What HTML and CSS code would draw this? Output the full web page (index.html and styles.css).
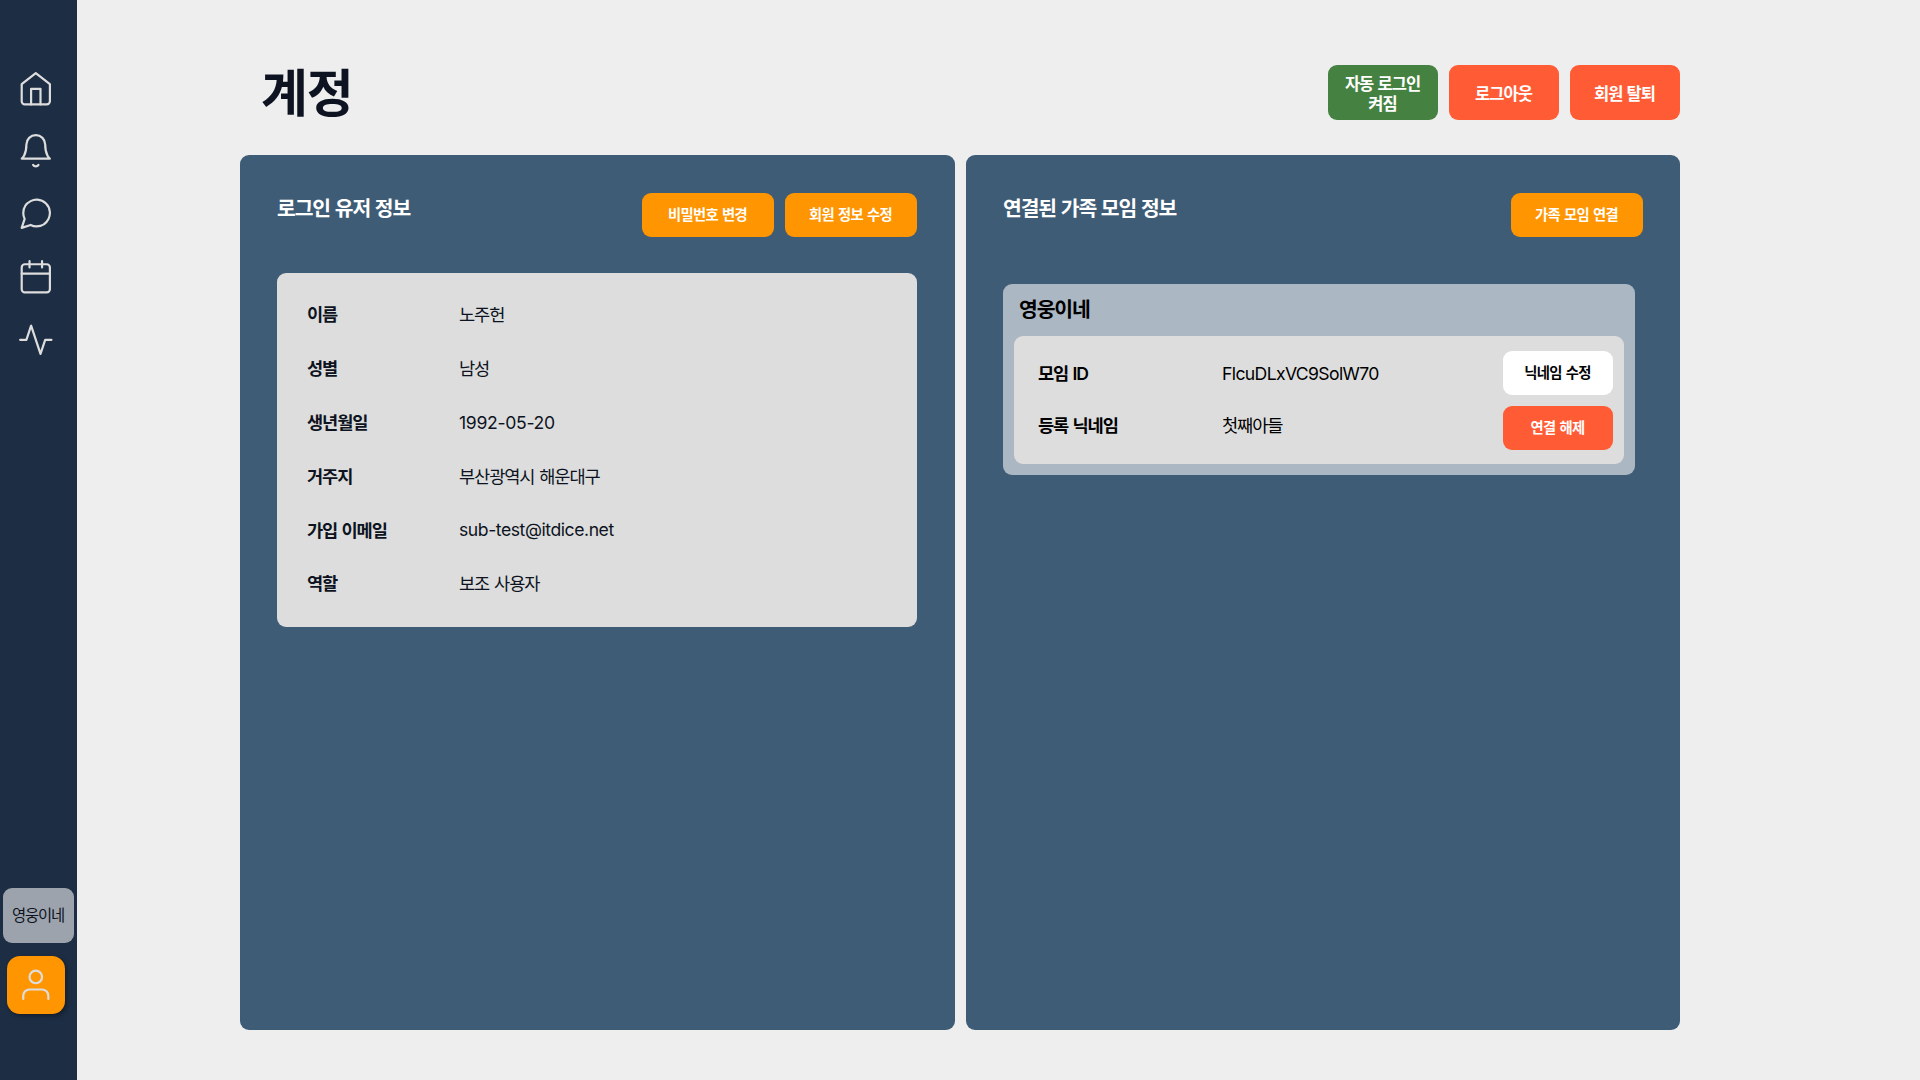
FILE: index.html
```html
<!DOCTYPE html>
<html lang="ko">
<head>
<meta charset="utf-8">
<title>계정</title>
<link rel="stylesheet" href="styles.css">
</head>
<body>
<nav class="sidebar">
  <div class="menu">
    <svg class="icon" viewBox="0 0 24 24"><path d="M3 9l9-7 9 7v11a2 2 0 0 1-2 2H5a2 2 0 0 1-2-2z"/><path d="M9 22V12h6v10"/></svg>
    <svg class="icon" viewBox="0 0 24 24"><path d="M18 8A6 6 0 0 0 6 8c0 7-3 9-3 9h18s-3-2-3-9"/><path d="M13.73 21a2 2 0 0 1-3.46 0"/></svg>
    <svg class="icon" viewBox="0 0 24 24"><path d="M21 11.5a8.38 8.38 0 0 1-.9 3.8 8.5 8.5 0 0 1-7.6 4.7 8.38 8.38 0 0 1-3.8-.9L3 21l1.900-5.700a8.38 8.38 0 0 1-.9-3.800 8.500 8.500 0 0 1 4.700-7.600 8.380 8.380 0 0 1 3.800-.9h.5a8.480 8.480 0 0 1 8 8v.5z"/></svg>
    <svg class="icon" viewBox="0 0 24 24"><rect x="3" y="4" width="18" height="18" rx="2"/><path d="M16 2v4M8 2v4M3 10h18"/></svg>
    <svg class="icon" viewBox="0 0 24 24"><path d="M22 12h-4l-3 9L9 3l-3 9H2"/></svg>
  </div>
  <div class="profile">
    <div class="family-chip">영웅이네</div>
    <div class="user-tile">
      <svg class="icon" viewBox="0 0 24 24"><path d="M20 21v-2a4 4 0 0 0-4-4H8a4 4 0 0 0-4 4v2"/><circle cx="12" cy="7" r="4"/></svg>
    </div>
  </div>
</nav>
<main class="page">
  <header class="page-header">
    <h1>계정</h1>
    <div class="actions">
      <button class="btn large green">자동 로그인<br>켜짐</button>
      <button class="btn large red">로그아웃</button>
      <button class="btn large red">회원 탈퇴</button>
    </div>
  </header>
  <div class="panels">
    <section class="panel">
      <div class="panel-head">
        <h2>로그인 유저 정보</h2>
        <div class="actions">
          <button class="btn orange">비밀번호 변경</button>
          <button class="btn orange">회원 정보 수정</button>
        </div>
      </div>
      <dl class="info">
        <dt>이름</dt><dd>노주헌</dd>
        <dt>성별</dt><dd>남성</dd>
        <dt>생년월일</dt><dd class="number">1992-05-20</dd>
        <dt>거주지</dt><dd>부산광역시 해운대구</dd>
        <dt>가입 이메일</dt><dd class="email">sub-test@itdice.net</dd>
        <dt>역할</dt><dd>보조 사용자</dd>
      </dl>
    </section>
    <section class="panel">
      <div class="panel-head">
        <h2>연결된 가족 모임 정보</h2>
        <div class="actions">
          <button class="btn orange">가족 모임 연결</button>
        </div>
      </div>
      <article class="family">
        <h3>영웅이네</h3>
        <div class="family-body">
          <dl class="family-info">
            <dt>모임 ID</dt><dd class="code">FlcuDLxVC9SolW70</dd>
            <dt>등록 닉네임</dt><dd>첫째아들</dd>
          </dl>
          <div class="family-actions">
            <button class="btn white">닉네임 수정</button>
            <button class="btn red">연결 해제</button>
          </div>
        </div>
      </article>
    </section>
  </div>
</main>
</body>
</html>
```
FILE: styles.css
```css
* { box-sizing: border-box; }
body {
  margin: 0;
  height: 1080px;
  display: flex;
  background: #eee;
  color: #0d1321;
  font-family: Inter, "Noto Sans CJK KR", sans-serif;
  font-size: 17.6px;
  letter-spacing: -0.063em;
  word-spacing: 0.06em;
  overflow: hidden;
}
h1, h2, h3, dl, dd { margin: 0; }

.sidebar {
  width: 77px;
  height: 100%;
  padding: 69.7px 0 66px;
  background: #1d2d44;
  display: flex;
  flex-direction: column;
  justify-content: space-between;
}
.icon {
  display: block;
  width: 37.6px;
  height: 37.6px;
  fill: none;
  stroke: #ddd;
  stroke-width: 1.4;
  stroke-linecap: round;
  stroke-linejoin: round;
}
.menu { display: flex; flex-direction: column; gap: 25.2px; padding-left: 16.5px; }
.profile { display: flex; flex-direction: column; gap: 13px; padding-left: 3px; }
.family-chip {
  width: 71px;
  height: 55px;
  padding: 0 1px 3px 0;
  border-radius: 9px;
  background: #9da3ad;
  display: flex;
  align-items: center;
  justify-content: center;
  font-size: 15.4px;
}
.user-tile {
  width: 58px;
  height: 58px;
  margin-left: 4px;
  border-radius: 13px;
  background: #ff9500;
  box-shadow: 2px 2px 4px rgba(0, 0, 0, .35);
  display: flex;
  align-items: center;
  justify-content: center;
}

.page { width: 1440px; margin-left: 163px; padding-top: 65px; }
.page-header { display: flex; justify-content: space-between; height: 90px; padding-left: 21px; }
h1 { padding-top: 1px; font-size: 51px; line-height: 55px; font-weight: 700; }
.actions { display: flex; gap: 11px; align-items: flex-start; }
.btn {
  width: 132px;
  height: 44px;
  padding: 0 1px 0 0;
  border: 0;
  border-radius: 9px;
  color: #fff;
  font: 700 14.3px/20px Inter, "Noto Sans CJK KR", sans-serif;
  letter-spacing: -0.045em;
  word-spacing: 0.08em;
}
.btn.large { width: 110px; height: 55px; padding-top: 2px; font-size: 16.5px; letter-spacing: -0.06em; }
.green { background: #458241; }
.red { background: #ff5c35; }
.orange { background: #ff9500; }
.btn.white { background: #fff; color: #000; }

.panels { display: grid; grid-template-columns: 715px 714px; gap: 11px; height: 875px; }
.panel { background: #3e5c76; border-radius: 9px; padding: 38px 37px; }
.panel-head { display: flex; justify-content: space-between; width: 640px; height: 80px; }
h2 { padding-top: 1px; color: #fff; font-size: 20.4px; line-height: 30px; font-weight: 700; }
.info {
  width: 640px;
  height: 354px;
  padding: 14px 30px;
  border-radius: 9px;
  background: #ddd;
  display: grid;
  grid-template-columns: 152px 1fr;
  grid-auto-rows: 53.8px;
  align-items: center;
}
dt { font-weight: 600; }
.number { letter-spacing: -0.018em; padding-top: 3px; }
.email { letter-spacing: -0.025em; padding-top: 1px; }
.code { letter-spacing: -0.036em; padding-top: 3px; }
.family {
  width: 632px;
  margin-top: 11px;
  padding: 0 11px 11px;
  border-radius: 9px;
  background: #abb7c3;
  color: #000;
}
h3 { height: 52px; padding-left: 5px; font-size: 20.4px; line-height: 52px; font-weight: 600; }
.family-body {
  height: 128px;
  padding: 15px 11px 0 24px;
  border-radius: 9px;
  background: #ddd;
  display: flex;
  justify-content: space-between;
}
.family-info {
  display: grid;
  grid-template-columns: 184px 1fr;
  grid-auto-rows: 52px;
  align-items: center;
  margin-top: -5px;
}
.family-actions { display: flex; flex-direction: column; gap: 11px; }
.family-actions .btn { width: 110px; }
```
